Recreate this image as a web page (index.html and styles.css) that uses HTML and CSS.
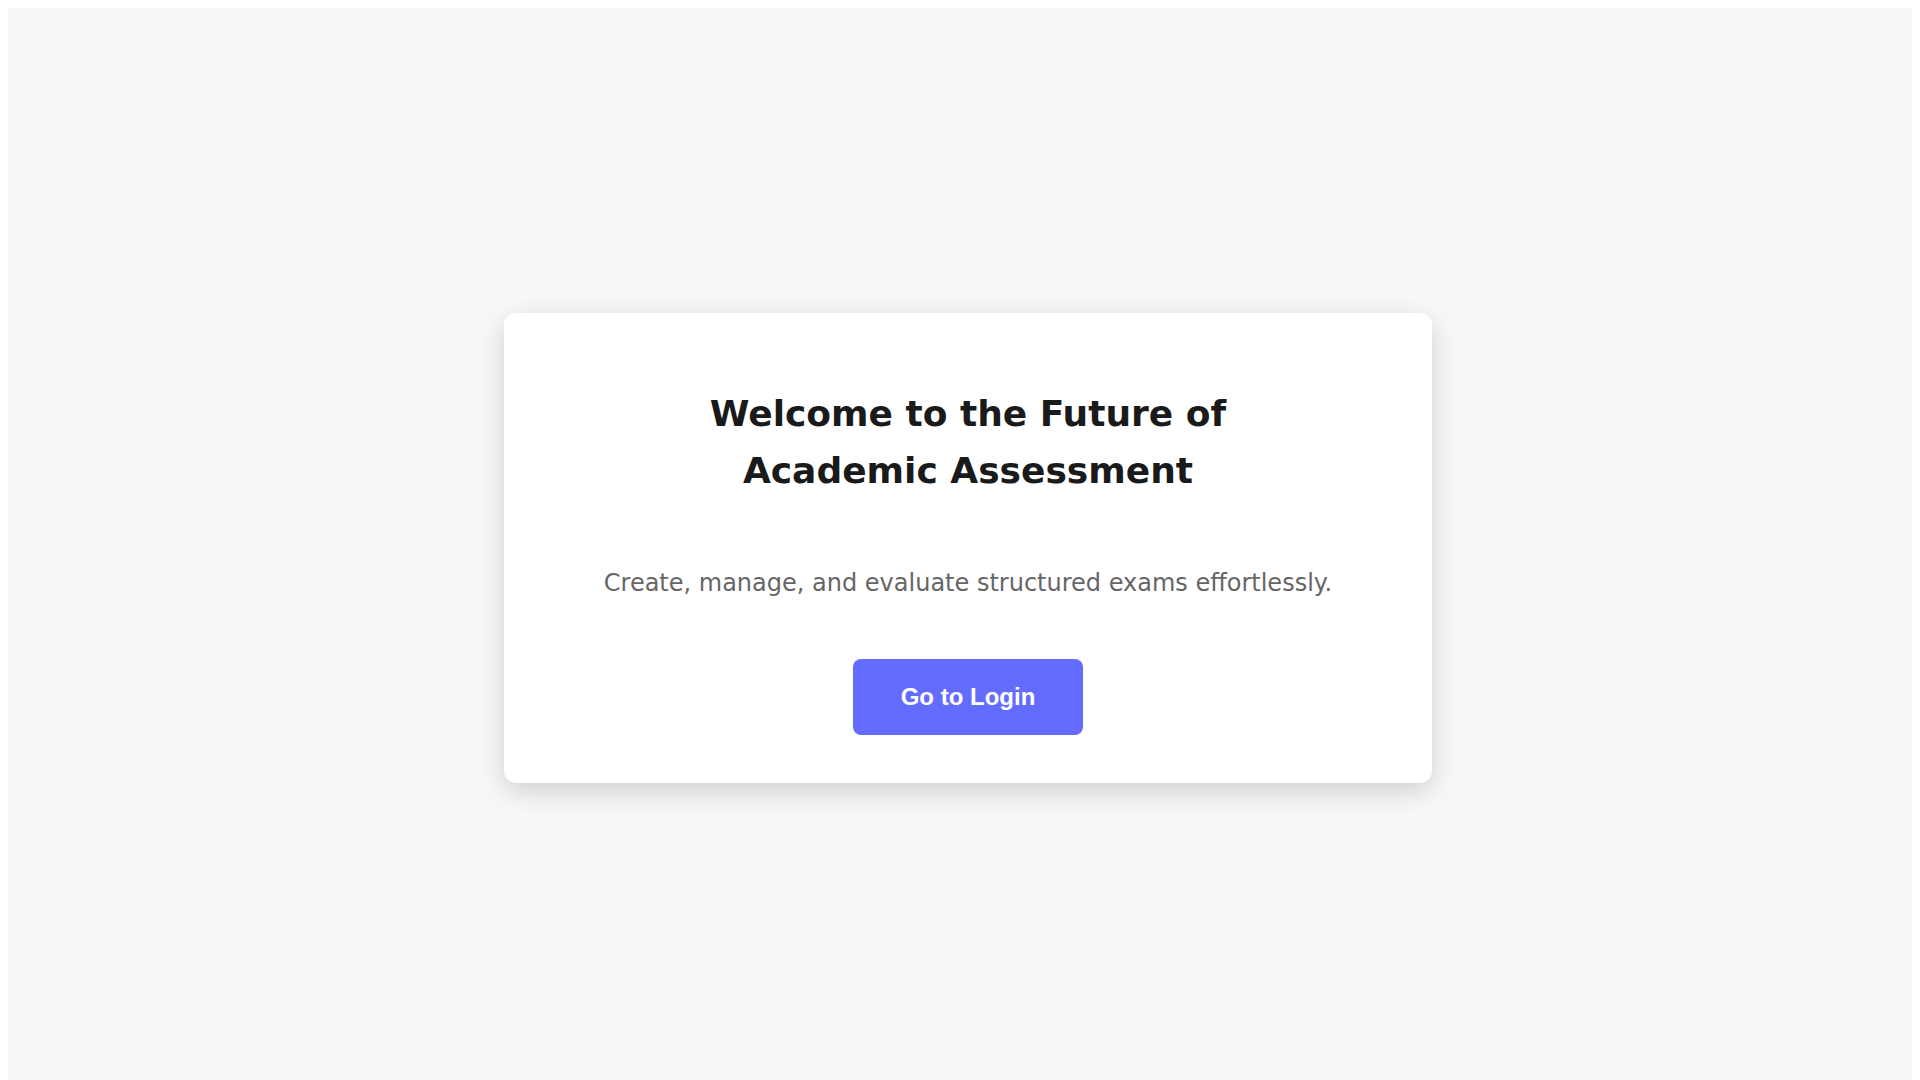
FILE: index.html
```html
<!DOCTYPE html>
<html lang="en">
<head>
<meta charset="utf-8">
<title>Academic Assessment</title>
<link rel="stylesheet" href="styles.css">
</head>
<body>
<div class="page">
  <div class="stage">
    <main class="card">
      <h1 class="title">Welcome to the Future of Academic Assessment</h1>
      <p class="subtitle">Create, manage, and evaluate structured exams effortlessly.</p>
      <button class="login-btn" type="button">Go to Login</button>
    </main>
  </div>
</div>
</body>
</html>
```

FILE: styles.css
```css
html {
  background: #ffffff;
  overflow-y: scroll;
}

body {
  margin: 8px;
  background: #ffffff;
  font-family: "DejaVu Sans", sans-serif;
}

.page {
  background: #f8f8f8;
  overflow-x: hidden;
}

.stage {
  width: 100vw;
  height: 100vh;
  display: flex;
  align-items: center;
  justify-content: center;
}

.card {
  box-sizing: border-box;
  width: 928px;
  padding: 48px 64px;
  background: #ffffff;
  border-radius: 12px;
  box-shadow: 0 8px 28px rgba(0, 0, 0, 0.17);
  display: flex;
  flex-direction: column;
  align-items: center;
  text-align: center;
}

.title {
  margin: 24px 0 0;
  max-width: 600px;
  font-size: 36px;
  line-height: 1.6;
  font-weight: bold;
  color: #1a1a1a;
}

.subtitle {
  margin: 64px 0 0;
  font-size: 24px;
  line-height: 1.6;
  color: #666666;
}

.login-btn {
  margin-top: 57px;
  padding: 24px 48px;
  border: none;
  border-radius: 8px;
  background: #646cff;
  color: #ffffff;
  font-family: "Liberation Sans", Arial, sans-serif;
  font-size: 24px;
  font-weight: bold;
  line-height: normal;
  cursor: pointer;
}
```
